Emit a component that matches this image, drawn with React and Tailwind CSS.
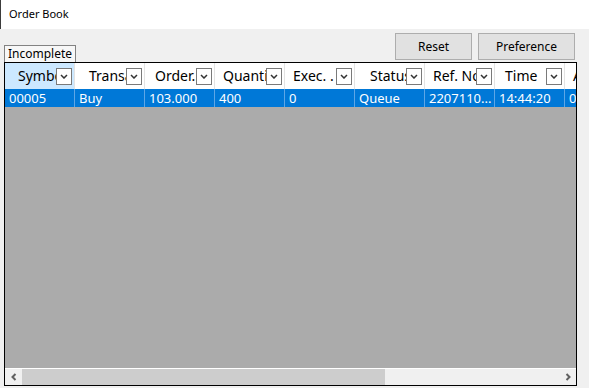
import React from 'react';

const cols = [
    { label: "Symbol", pad: "pl-[13px]", value: "00005" },
    { label: "Transaction", pad: "pl-[14px]", value: "Buy" },
    { label: "Order...", pad: "pl-[10px]", value: "103.000" },
    { label: "Quantity", pad: "pl-[8px]", value: "400" },
    { label: "Exec. .", pad: "pl-[8px]", value: "0" },
    { label: "Status", pad: "pl-[15px]", value: "Queue" },
    { label: "Ref. No", pad: "pl-[8px]", value: "2207110..." },
    { label: "Time", pad: "pl-[10px]", value: "14:44:20" },
    { label: "A", pad: "pl-[8px]", value: "0" },
];

const FilterBox = () => (
    <div className="absolute right-[2px] top-[5px] w-[16px] h-[17px] border border-[#7a7a7a] bg-white flex items-center justify-center">
        <svg width="8" height="5" viewBox="0 0 8 5">
            <polyline points="1,1 4,4 7,1" fill="none" stroke="#333" strokeWidth="1.5" />
        </svg>
    </div>
);

export default function App() {
    return (
        <div className="w-[589px] h-[388px] bg-[#f0f0f0] overflow-hidden text-black" style={{ fontFamily: '"Noto Sans", "Open Sans", sans-serif' }}>
            {/* title */}
            <div className="h-[29px] bg-white border-l border-[#3c3c3c] flex items-center pl-[8px] text-[11px]">
                Order Book
            </div>

            {/* tab + buttons */}
            <div className="h-[33px] flex items-end justify-between pl-[4px] pr-[14px]">
                <div className="h-[17px] px-[3px] border border-b-0 border-[#828282] bg-[#f7f7f7] text-[12px] leading-[16px]">
                    Incomplete
                </div>
                <div className="flex gap-[6px] mb-[2px]">
                    <button className="w-[77px] h-[27px] bg-[#e1e1e1] border border-[#adadad] text-[12px]">Reset</button>
                    <button className="w-[97px] h-[27px] bg-[#e1e1e1] border border-[#adadad] text-[12px]">Preference</button>
                </div>
            </div>

            {/* grid */}
            <div className="ml-[4px] w-[573px] h-[324px] border border-black flex flex-col bg-[#ababab]">
                <div className="h-[26px] bg-white flex overflow-hidden shrink-0">
                    {cols.map((c, i) => (
                        <div
                            key={i}
                            className={`relative shrink-0 w-[70px] h-full border-r border-[#e3e3e3] overflow-hidden ${i === 0 ? "bg-[#cce8ff]" : "bg-white"}`}
                        >
                            <div className={`absolute inset-y-0 left-0 right-[18px] overflow-hidden whitespace-nowrap text-[14px] leading-[26px] ${c.pad}`}>
                                {c.label}
                            </div>
                            <FilterBox />
                        </div>
                    ))}
                </div>
                <div className="h-[18px] bg-[#0078d7] flex overflow-hidden shrink-0">
                    {cols.map((c, i) => (
                        <div key={i} className="shrink-0 w-[70px] h-full border-r border-[#5ea6e6] pl-[4px] text-white text-[13px] leading-[19px] whitespace-nowrap overflow-hidden">
                            {c.value}
                        </div>
                    ))}
                </div>
                <div className="flex-1" />
                <div className="h-[17px] border-t border-white bg-[#f0f0f0] flex items-stretch shrink-0">
                    <div className="w-[17px] flex items-center justify-center">
                        <svg width="8" height="8" viewBox="0 0 8 8">
                            <polyline points="5.5,1 2.5,4 5.5,7" fill="none" stroke="#606060" strokeWidth="2" />
                        </svg>
                    </div>
                    <div className="w-[363px] bg-[#cdcdcd]" />
                    <div className="flex-1" />
                    <div className="w-[17px] flex items-center justify-center">
                        <svg width="8" height="8" viewBox="0 0 8 8">
                            <polyline points="2.5,1 5.5,4 2.5,7" fill="none" stroke="#606060" strokeWidth="2" />
                        </svg>
                    </div>
                </div>
            </div>
        </div>
    );
}
